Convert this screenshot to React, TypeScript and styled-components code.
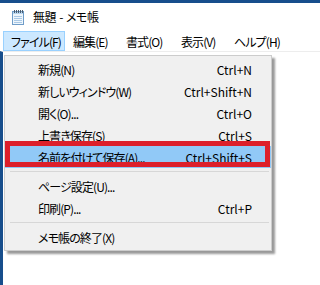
import React from "react";
import styled, { createGlobalStyle } from "styled-components";

const Global = createGlobalStyle`
  html, body { margin: 0; padding: 0; background: #ffffff; }
  body {
    font-family: "Noto Sans CJK JP", "Noto Sans", sans-serif;
    font-feature-settings: "palt";
    -webkit-font-smoothing: antialiased;
  }
`;

const Window = styled.div`
  width: 320px;
  height: 285px;
  overflow: hidden;
  background: #ffffff;
  border-top: 3px solid #174e8c;
  box-sizing: border-box;
  display: flex;
  flex-direction: column;
  position: relative;
  font-size: 12px;
  color: #000;
`;

const TitleBar = styled.div`
  height: 28px;
  display: flex;
  align-items: center;
  gap: 7px;
  padding-left: 11px;
`;

const Title = styled.span`
  font-size: 12px;
  line-height: 14px;
  letter-spacing: -0.5px;
  word-spacing: 1px;
`;

const MenuBar = styled.div`
  height: 20px;
  display: flex;
  align-items: stretch;
  padding-left: 3px;
`;

const MenuTitle = styled.div<{ $active?: boolean; $w: number }>`
  width: ${(p) => p.$w}px;
  box-sizing: border-box;
  display: flex;
  align-items: center;
  padding-left: 7px;
  letter-spacing: -0.9px;
  background: ${(p) => (p.$active ? "#cce8ff" : "transparent")};
  border: 1px solid ${(p) => (p.$active ? "#99d1ff" : "transparent")};
  white-space: nowrap;
`;

const Content = styled.div`
  flex: 1;
  border-left: 3px solid #174e8c;
  border-top: 1px solid #ededed;
  background: #ffffff;
`;

const Dropdown = styled.div`
  position: absolute;
  left: 4px;
  top: 52px;
  width: 268px;
  box-sizing: border-box;
  background: #f0f0f0;
  border: 1px solid #cccccc;
  box-shadow: 3px 3px 2px rgba(0, 0, 0, 0.4);
  padding: 2px 0;
  display: flex;
  flex-direction: column;
`;

const Item = styled.div<{ $hot?: boolean }>`
  position: relative;
  height: 22px;
  display: grid;
  grid-template-columns: 1fr auto;
  align-items: center;
  padding: 0 19px 0 33px;
  white-space: nowrap;
  background: ${(p) => (p.$hot ? "#91c9f7" : "transparent")};
`;

const Label = styled.span`
  letter-spacing: -0.9px;
`;

const Shortcut = styled.span`
  text-align: right;
`;

const Separator = styled.div`
  height: 7px;
  display: flex;
  align-items: flex-start;
  padding: 3px 2px 0 5px;
  box-sizing: border-box;
  &::after {
    content: "";
    flex: 1;
    height: 1px;
    background: #d7d7d7;
  }
`;

const RedMark = styled.div`
  position: absolute;
  left: 0;
  right: 1px;
  top: -5px;
  bottom: 1px;
  border: 5px solid #dd1f2a;
  pointer-events: none;
`;

const NotepadIcon = () => (
  <svg width="15" height="17" viewBox="0 0 15 17">
    <rect x="1.5" y="2.5" width="11" height="13" fill="#eef6fc" stroke="#6f9cc8" />
    <rect x="2" y="3" width="10" height="2" fill="#b9d6ee" />
    {[3, 5, 7, 9, 11].map((x) => (
      <rect key={x} x={x} y="1" width="1" height="3" fill="#4b5d70" />
    ))}
    {[7, 9, 11, 13].map((y) => (
      <rect key={y} x="3" y={y} width="8" height="1" fill="#a9c8e6" />
    ))}
  </svg>
);

const menus: [string, number, boolean][] = [
  ["ファイル(F)", 62, true],
  ["編集(E)", 53, false],
  ["書式(O)", 55, false],
  ["表示(V)", 53, false],
  ["ヘルプ(H)", 70, false],
];

type Entry = { label: string; key?: string; hot?: boolean } | "sep";

const entries: Entry[] = [
  { label: "新規(N)", key: "Ctrl+N" },
  { label: "新しいウィンドウ(W)", key: "Ctrl+Shift+N" },
  { label: "開く(O)...", key: "Ctrl+O" },
  { label: "上書き保存(S)", key: "Ctrl+S" },
  { label: "名前を付けて保存(A)...", key: "Ctrl+Shift+S", hot: true },
  "sep",
  { label: "ページ設定(U)..." },
  { label: "印刷(P)...", key: "Ctrl+P" },
  "sep",
  { label: "メモ帳の終了(X)" },
];

export default function App() {
  return (
    <>
      <Global />
      <Window>
        <TitleBar>
          <NotepadIcon />
          <Title>無題 - メモ帳</Title>
        </TitleBar>
        <MenuBar>
          {menus.map(([m, w, a]) => (
            <MenuTitle key={m} $active={a} $w={w}>
              {m}
            </MenuTitle>
          ))}
        </MenuBar>
        <Content />
        <Dropdown>
          {entries.map((e, i) =>
            e === "sep" ? (
              <Separator key={i} />
            ) : (
              <Item key={i} $hot={e.hot}>
                <Label>{e.label}</Label>
                <Shortcut>{e.key ?? ""}</Shortcut>
                {e.hot && <RedMark />}
              </Item>
            )
          )}
        </Dropdown>
      </Window>
    </>
  );
}
